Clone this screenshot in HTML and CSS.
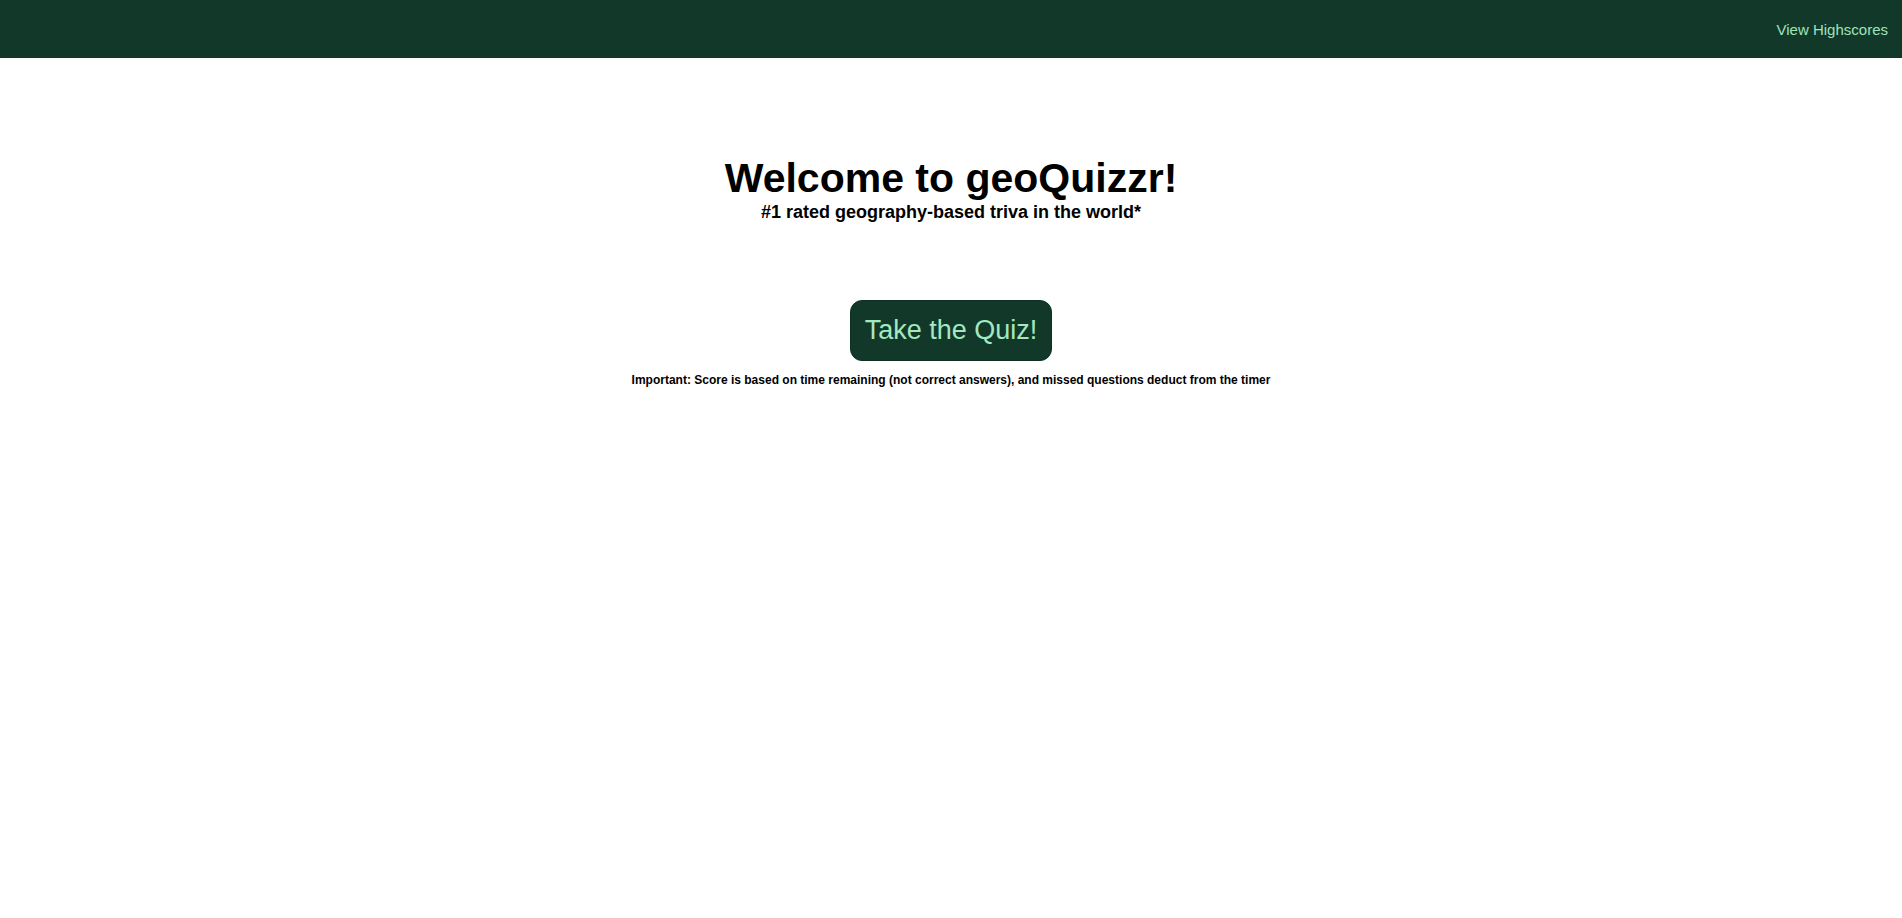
FILE: index.html
```html
<!DOCTYPE html>
<html lang="en">
<head>
<meta charset="utf-8">
<title>geoQuizzr</title>
<link rel="stylesheet" href="styles.css">
</head>
<body>
<header class="topbar">
  <a class="highscores" href="#">View Highscores</a>
</header>
<main class="intro">
  <h1 class="title">Welcome to geoQuizzr!</h1>
  <h3 class="subtitle">#1 rated geography-based triva in the world*</h3>
  <button class="start">Take the Quiz!</button>
  <p class="note">Important: Score is based on time remaining (not correct answers), and missed questions deduct from the timer</p>
</main>
</body>
</html>
```
FILE: styles.css
```css
html, body {
  margin: 0;
  padding: 0;
  background: #ffffff;
  font-family: "Liberation Sans", Arial, sans-serif;
  color: #000;
}
.topbar {
  height: 58px;
  background: #12382a;
  display: flex;
  justify-content: flex-end;
  align-items: center;
  padding: 0 14px;
  box-sizing: border-box;
}
.highscores {
  color: #9fe3bb;
  text-decoration: none;
  font-size: 15px;
}
.intro {
  display: flex;
  flex-direction: column;
  align-items: center;
  padding-top: 96px;
}
.title {
  margin: 0;
  font-size: 41px;
  line-height: 48px;
  font-weight: bold;
}
.subtitle {
  margin: 0;
  font-size: 18px;
  line-height: 20px;
  font-weight: bold;
}
.start {
  margin-top: 78px;
  background: #12382a;
  color: #a3e8c0;
  border: 1px solid #0e3023;
  border-radius: 12px;
  font-family: "Liberation Sans", Arial, sans-serif;
  font-size: 27px;
  padding: 14px 14px;
  cursor: pointer;
}
.note {
  margin: 12px 0 0;
  font-size: 12px;
  font-weight: bold;
}
```
